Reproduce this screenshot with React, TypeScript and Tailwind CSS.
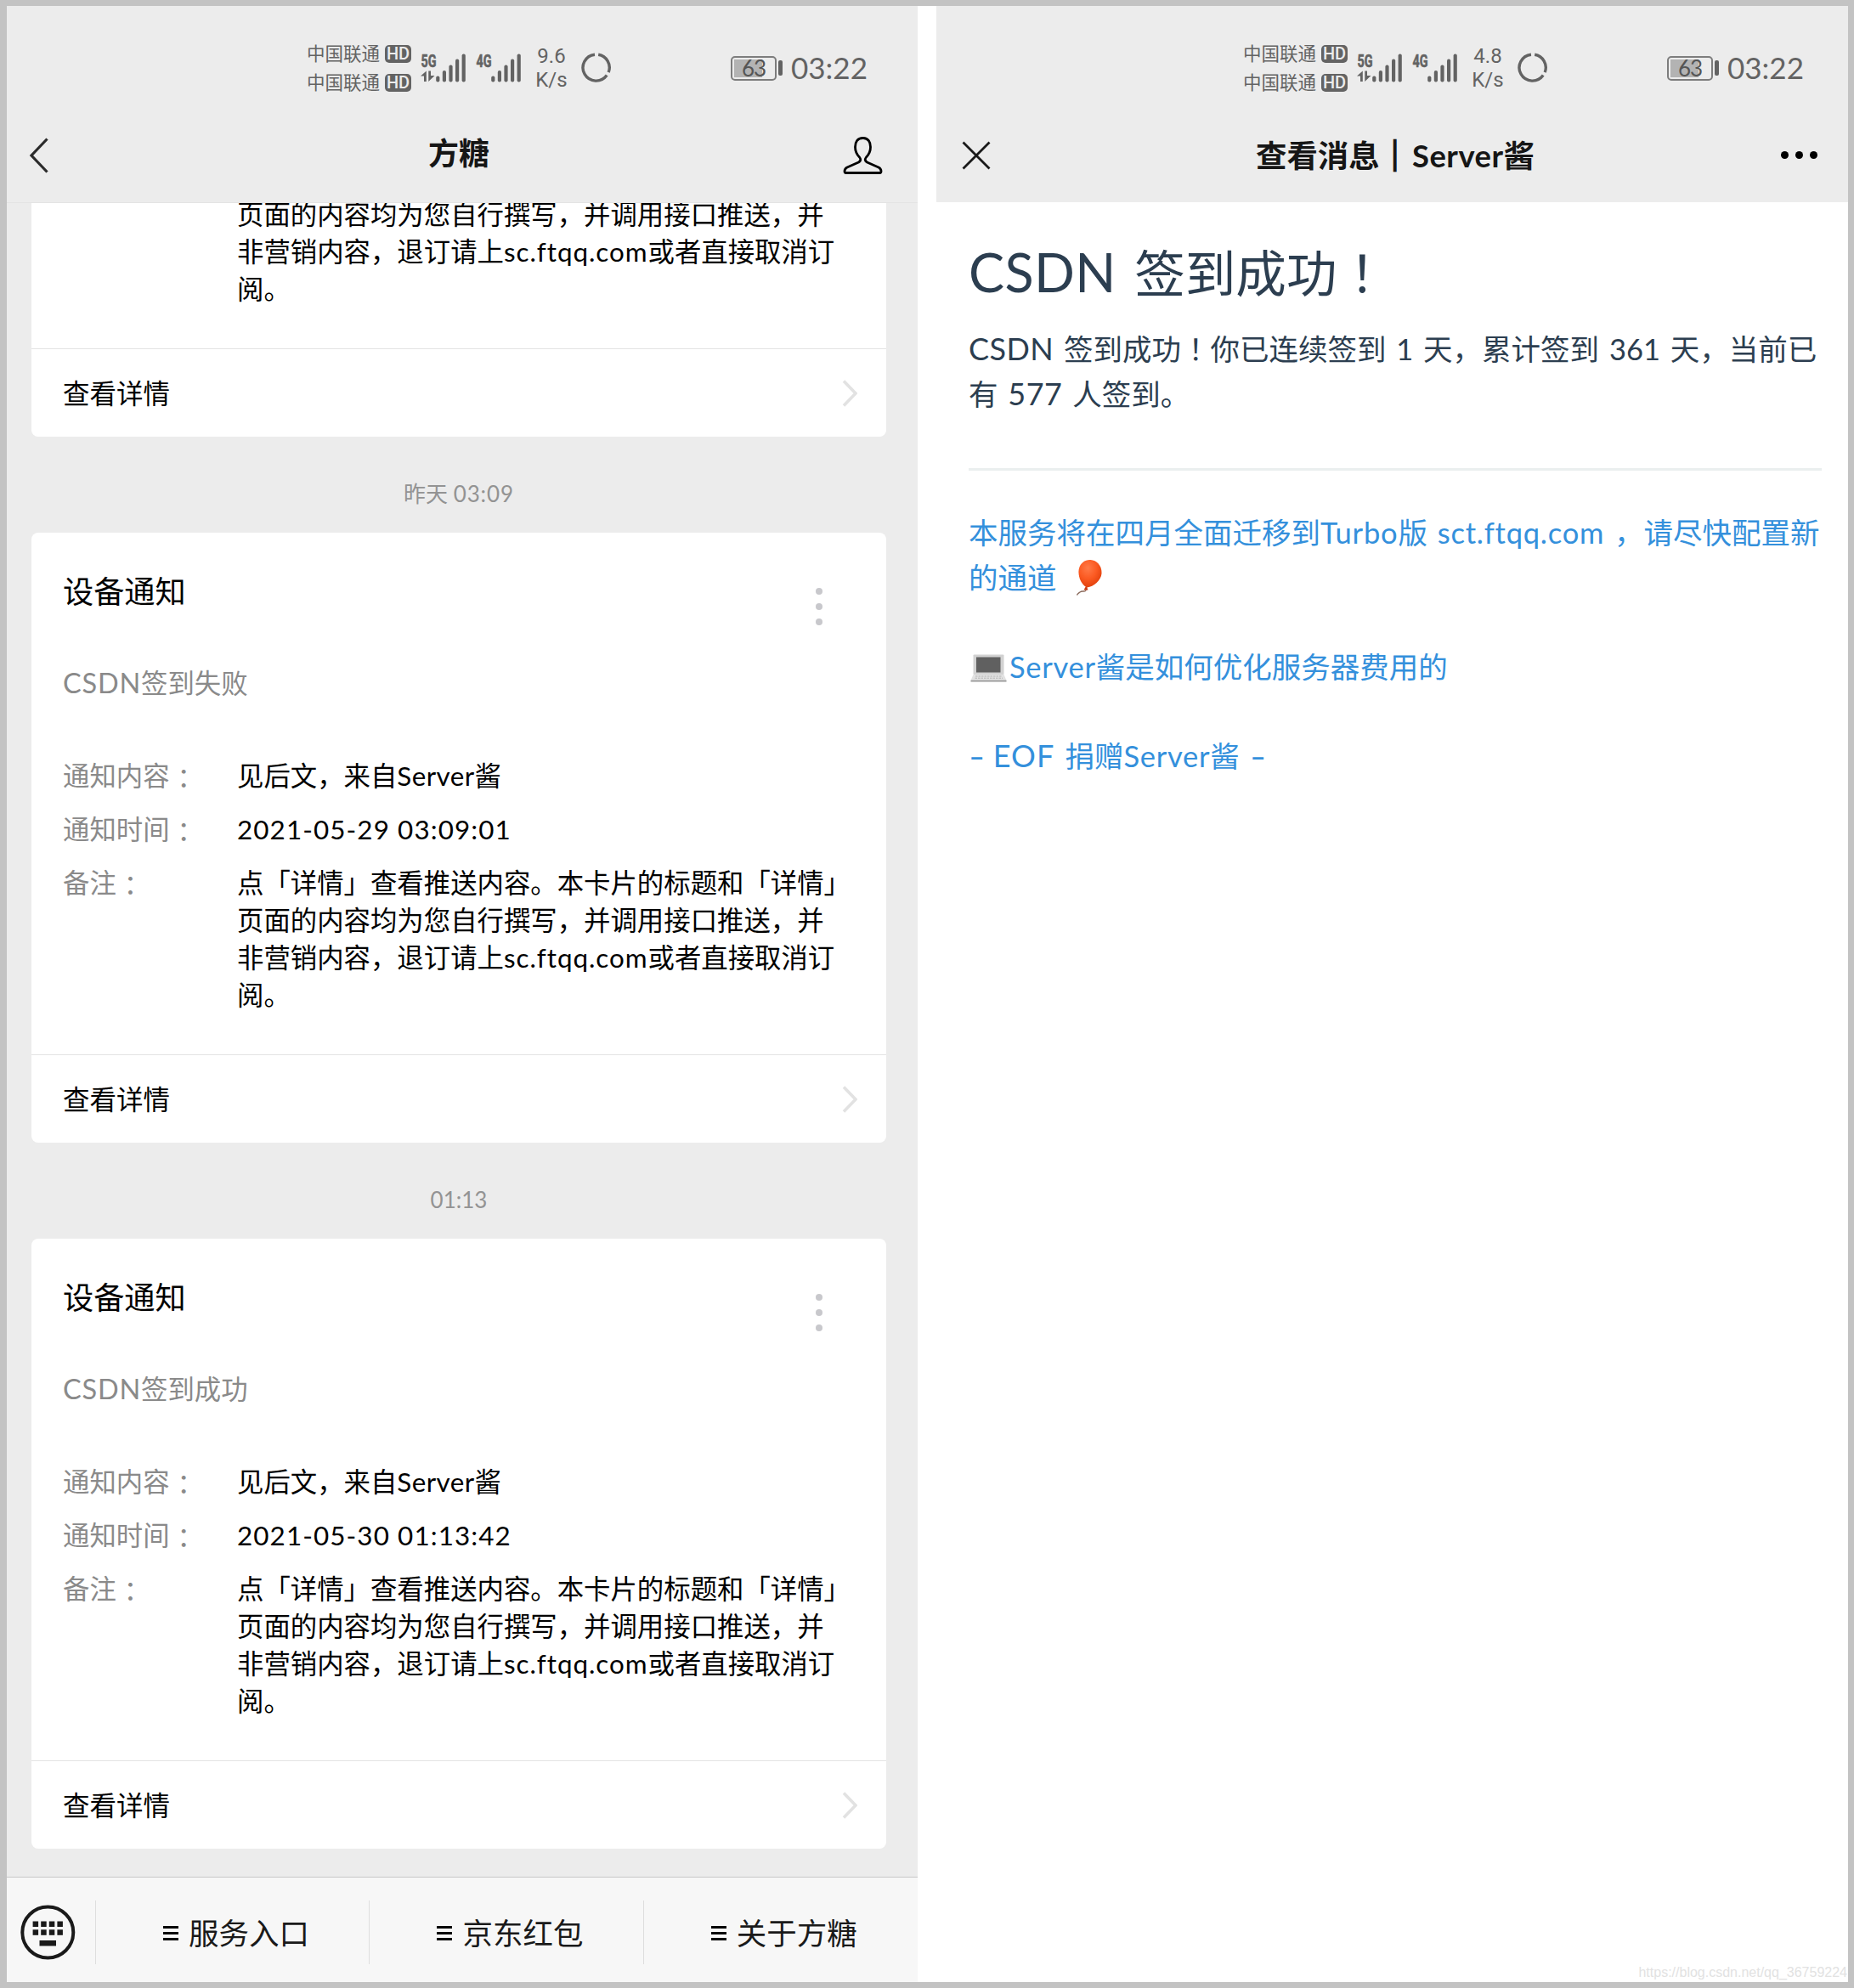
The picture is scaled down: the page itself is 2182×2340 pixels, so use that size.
import type { ReactNode } from "react";

type Notice = {
  id: number;
  time?: ReactNode;
  subject?: string;
  sentAt?: string;
};

// the oldest notice is scrolled up, only its tail is rendered
const notices: Notice[] = [
  { id: 1 },
  {
    id: 2,
    time: (
      <>
        昨天 <span className="tracking-[0.9px]">03:09</span>
      </>
    ),
    subject: "签到失败",
    sentAt: "2021-05-29 03:09:01",
  },
  { id: 3, time: "01:13", subject: "签到成功", sentAt: "2021-05-30 01:13:42" },
];

const tabs = ["服务入口", "京东红包", "关于方糖"];

// the TC face centres full-width punctuation in its cell
function Wide({ children }: { children: ReactNode }) {
  return <span className="font-['Noto_Sans_CJK_TC',sans-serif] leading-none">{children}</span>;
}

function Carrier() {
  return (
    <div className="flex h-[34px] items-center">
      <span className="w-[92px] text-[21.5px]">中国联通</span>
      <span className="flex h-[21px] w-[31px] items-center justify-center rounded-[5px] bg-[#636363] font-['Roboto'] text-[20px] leading-[21px] font-medium text-[#ececec]">
        HD
      </span>
    </div>
  );
}

function Signal({ label, arrows }: { label: string; arrows?: boolean }) {
  return (
    <svg width="54" height="48" viewBox="0 -6 54 48" fill="#636363">
      <text x="0.5" y="16.5" fontFamily="Roboto" fontWeight="700" fontSize="20" textLength="18" lengthAdjust="spacingAndGlyphs" stroke="#636363" strokeWidth="0.6">
        {label}
      </text>
      {arrows && <path d="M0 27.5 L6.8 21.5 V34 H4 V27.5 Z M9.3 21.5 H12 V27 H16.5 L9.3 34 Z" />}
      {[27.5, 21, 14.5, 7.5, 1.5].map((y, i) => (
        <rect key={y} x={18.2 + i * 7.6} y={y} width="4.2" height={34.5 - y} rx="2" />
      ))}
    </svg>
  );
}

function StatusBar({ speed }: { speed: string }) {
  return (
    <div className="flex h-[160px] items-center pl-[361px] text-[#636363]">
      <div className="w-[134px]">
        <Carrier />
        <Carrier />
      </div>
      <div className="flex w-[126px] gap-[11px]">
        <Signal label="5G" arrows />
        <Signal label="4G" />
      </div>
      <div className="w-[56px] text-center font-['Roboto'] text-[24px] leading-[28px]">
        <p>{speed}</p>
        <p>K/s</p>
      </div>
      <svg className="ml-[7px]" width="36" height="36" viewBox="0 0 36 36" fill="none" stroke="#636363" strokeWidth="3.4">
        <path d="M20.2 2.2 A15.5 15.5 0 0 1 32.2 23.1" />
        <path d="M30.2 26.6 A15.5 15.5 0 1 1 16 2.2" />
      </svg>
      <div className="ml-[140px] flex items-center">
        <div className="relative flex h-[29px] w-[54px] items-center justify-center rounded-[5px] border-2 border-[#7d7d7d] text-[26px] leading-[25px] text-[#555]">
          <div className="absolute top-[2px] left-[2px] h-[21px] w-[33px] bg-[#b3b3b3]" />
          <span className="relative tracking-[-1px]">63</span>
        </div>
        <div className="ml-[2px] h-[18px] w-[5px] rounded-[2px] bg-[#636363]" />
      </div>
      <span className="ml-[10px] pb-[2px] text-[35px] leading-[42px]">03:22</span>
    </div>
  );
}

function Row({ label, children }: { label: string; children: ReactNode }) {
  return (
    <div className="flex text-[31.4px] leading-[44px]">
      <span className="flex w-[205px] shrink-0 text-[#8a8a8a]">
        {label}
        <span className="-mb-[2px] pt-[2px] pl-px font-['Noto_Sans_CJK_TC',sans-serif]">：</span>
      </span>
      <div className="whitespace-nowrap text-black">{children}</div>
    </div>
  );
}

function NoteTail() {
  return (
    <>
      页面的内容均为您自行撰写，并调用接口推送，并
      <br />
      非营销内容，退订请上<span className="tracking-[0.95px]">sc.ftqq.com</span>或者直接取消订
      <br />
      阅。
    </>
  );
}

function NoticeCard({ notice }: { notice: Notice }) {
  return (
    <article className="mx-[37px] h-[718px] rounded-[8px] bg-white">
      <div className="relative flex h-[614px] flex-col justify-end px-[37px] pb-[48px]">
        {notice.subject && (
          <>
            <h3 className="text-[36.2px] leading-[44px] text-black">设备通知</h3>
            <p className="mt-16 mb-[65px] text-[31.4px] leading-[44px] text-[#8a8a8a]">
              <span className="text-[32.5px] leading-none tracking-[0.8px]">CSDN</span>
              {notice.subject}
            </p>
            <div className="absolute top-[65px] right-[75px] flex flex-col gap-[10px]">
              <i className="size-2 rounded-full bg-[#c8c8cc]" />
              <i className="size-2 rounded-full bg-[#c8c8cc]" />
              <i className="size-2 rounded-full bg-[#c8c8cc]" />
            </div>
          </>
        )}
        {notice.sentAt ? (
          <div className="flex flex-col gap-[19px]">
            <Row label="通知内容">
              见后文，来自<span className="tracking-[0.4px]">Server</span>酱
            </Row>
            <Row label="通知时间">
              <span className="tracking-[1.1px]">{notice.sentAt}</span>
            </Row>
            <Row label="备注">
              点「详情」查看推送内容。本卡片的标题和「详情」
              <br />
              <NoteTail />
            </Row>
          </div>
        ) : (
          <div className="pl-[205px] text-[31.4px] leading-[44px] whitespace-nowrap text-black">
            <NoteTail />
          </div>
        )}
      </div>
      <div className="flex h-[104px] items-center justify-between border-t border-[#e3e3e3] pr-[34px] pl-[37px] text-[31.5px] text-black">
        <span className="pt-[2px]">查看详情</span>
        <svg width="18" height="32" viewBox="0 0 18 32" fill="none" stroke="#e2e2e2" strokeWidth="3.6">
          <path d="M2 1.5 L16 16 L2 30.5" />
        </svg>
      </div>
    </article>
  );
}

function ChatScreen() {
  return (
    <section className="flex h-[2340px] w-[1080px] shrink-0 flex-col bg-[#ececec]">
      <header className="h-[239px] shrink-0 border-b border-[#e4e4e4]">
        <StatusBar speed="9.6" />
        <div className="grid h-11 grid-cols-[1fr_auto_1fr] items-center px-[34px]">
          <svg width="24" height="42" viewBox="0 0 24 42" fill="none" stroke="#2b2b2b" strokeWidth="3.2">
            <path d="M21.5 1.5 L3 21 L21.5 40.5" />
          </svg>
          <h1 className="pb-[6px] text-[36px] leading-[40px] font-bold text-[#161616]">方糖</h1>
          <svg className="mr-[7px] justify-self-end" width="47" height="46" viewBox="0 0 47 46" fill="none" stroke="#000" strokeWidth="2.8" strokeLinejoin="round">
            <path d="M23.5 2.5 C17 2.5 14.5 7.5 14.5 13 C14.5 18.5 16.5 22 19.5 25 C21.5 27.5 21 29.5 18.5 31 L5 37 C2.5 38.3 2 39.5 2 41.5 C2 43 2.3 43.5 3.5 43.5 H43.5 C44.7 43.5 45 43 45 41.5 C45 39.5 44.5 38.3 42 37 L28.5 31 C26 29.5 25.5 27.5 27.5 25 C30.5 22 32.5 18.5 32.5 13 C32.5 7.5 30 2.5 23.5 2.5 Z" />
          </svg>
        </div>
      </header>

      <main className="flex min-h-0 flex-1 flex-col justify-end overflow-hidden pb-[33px]">
        {notices.map((notice) => (
          <div key={notice.id} className="shrink-0">
            {notice.time && (
              <p className="h-[113px] pt-[51px] text-center text-[26px] leading-[32px] text-[#939393]">{notice.time}</p>
            )}
            <NoticeCard notice={notice} />
          </div>
        ))}
      </main>

      <footer className="flex h-[131px] shrink-0 border-t border-[#c8c8c8] bg-[#f7f7f7] pt-[27px]">
        <div className="flex h-[75px] w-[112px] items-center pl-[24px]">
          <svg width="65" height="65" viewBox="0 0 65 65" fill="#1a1a1a">
            <circle cx="32.3" cy="32.5" r="30" fill="none" stroke="#1a1a1a" strokeWidth="4" />
            {[14.6, 24.2, 33.8, 43.4].map((x) => (
              <g key={x}>
                <rect x={x} y="19.5" width="6.5" height="6.5" />
                <rect x={x} y="29.3" width="6.5" height="6.5" />
              </g>
            ))}
            <rect x="22.5" y="42" width="19.5" height="6.5" />
          </svg>
        </div>
        {tabs.map((tab) => (
          <div key={tab} className="flex h-[75px] w-[322.4px] items-center gap-[12px] border-l border-[#dedede] pt-[2px] pl-[79px]">
            <span className="flex w-[18px] flex-col gap-[4px]">
              <i className="h-[3px] bg-black" />
              <i className="h-[3px] bg-black" />
              <i className="h-[3px] bg-black" />
            </span>
            <span className="text-[35.5px] leading-[40px] text-[#1a1a1a]">{tab}</span>
          </div>
        ))}
      </footer>
    </section>
  );
}

function Balloon() {
  return (
    <svg className="ml-[11px] inline-block align-[-9px]" width="32" height="44" viewBox="0 0 32 44">
      <defs>
        <radialGradient id="balloon" cx="0.4" cy="0.3" r="0.7">
          <stop offset="0" stopColor="#ff7a48" />
          <stop offset="0.55" stopColor="#fb5a22" />
          <stop offset="1" stopColor="#e2400c" />
        </radialGradient>
      </defs>
      <path d="M12.5 35 C11.5 41 9 36 5 39 C3 40.5 2 41 1.5 42.5" fill="none" stroke="#8a6a5c" strokeWidth="1.4" />
      <path d="M12.5 31 L9.5 36.5 L14.5 36.5 Z" fill="#c93a12" />
      <path d="M17.5 1 C25 1.5 31 8 30.5 17 C30 25 21 32.5 13.5 33.5 C7 31 3 22 3.5 14 C4 6 10 0.5 17.5 1 Z" fill="url(#balloon)" />
    </svg>
  );
}

function Laptop() {
  return (
    <svg className="mr-[3px] ml-[2px] inline-block align-[-5px]" width="43" height="33" viewBox="0 0 43 33">
      <rect x="3.5" y="0.5" width="36" height="23.5" rx="1" fill="#d2d2d2" />
      <rect x="7" y="3.5" width="28.5" height="18" fill="#606060" />
      <path d="M3.5 24 H39.5 L42.5 31 H0.5 Z" fill="#e2e2e2" />
      <path d="M6 26 H37 M5.5 28.2 H38" stroke="#b4b4b4" strokeWidth="1" strokeDasharray="2.5 1" />
      <rect x="0.5" y="30.7" width="42" height="1.8" fill="#9a9a9a" />
    </svg>
  );
}

function MessageScreen() {
  return (
    <section className="h-[2340px] w-[1080px] shrink-0 bg-white">
      <header className="h-[238px] bg-[#ececec]">
        <StatusBar speed="4.8" />
        <div className="grid h-[46px] grid-cols-[1fr_auto_1fr] items-center px-[30px]">
          <svg width="34" height="34" viewBox="0 0 34 34" stroke="#1a1a1a" strokeWidth="2.8">
            <path d="M1.5 1.5 L32.5 32.5 M32.5 1.5 L1.5 32.5" />
          </svg>
          <h1 className="text-[36.4px] leading-[40px] font-bold text-[#161616]">
            查看消息<span className="mr-[2px] [-webkit-text-stroke:2.2px]">｜</span>
            <span className="tracking-[0.5px]">Server</span>酱
          </h1>
          <div className="mr-[13px] flex gap-[8px] justify-self-end pb-px">
            <i className="size-[9px] rounded-full bg-black" />
            <i className="size-[9px] rounded-full bg-black" />
            <i className="size-[9px] rounded-full bg-black" />
          </div>
        </div>
      </header>

      <main className="w-[1043px] pt-[43px] pl-[38px] text-[34.5px] leading-[53px] whitespace-nowrap text-[#2c3e50] [word-spacing:3px]">
        <h2 className="text-[59.6px] leading-[80px] [word-spacing:6px]">
          <span className="text-[63px] leading-none tracking-[0.4px]">CSDN</span> 签到成功<Wide>！</Wide>
        </h2>
        <p className="mt-[23px]">
          <span className="text-[36px] leading-none tracking-[0.4px]">CSDN</span> 签到成功<Wide>！</Wide>你已连续签到 1 天，累计签到 361 天，当前已
          <br />
          有 <span className="text-[36px] leading-none tracking-[0.5px]">577</span> 人签到。
        </p>
        <hr className="mt-[61px] w-[1004px] border-t-[3px] border-[#eaefef]" />
        <div className="mt-[46px] flex flex-col gap-[52px] text-[#3490dc]">
          <p className="h-[106px]">
            本服务将在四月全面迁移到<span className="tracking-[0.8px]">Turbo</span>版{" "}
            <span className="tracking-[0.75px]">sct.ftqq.com</span> ，请尽快配置新
            <br />
            的通道 <Balloon />
          </p>
          <p className="h-[53px]">
            <Laptop />
            <span className="tracking-[0.7px]">Server</span>酱是如何优化服务器费用的
          </p>
          <p className="h-[53px]">
            <span className="mr-[4px] inline-block origin-left scale-x-150">-</span>{" "}
            <span className="text-[36px] leading-none tracking-[1.2px]">EOF</span> 捐赠
            <span className="tracking-[0.7px]">Server</span>酱{" "}
            <span className="inline-block origin-left scale-x-150">-</span>
          </p>
        </div>
      </main>
    </section>
  );
}

export default function App() {
  return (
    <div className="relative flex h-[2340px] w-[2182px] gap-[22px] overflow-hidden bg-white font-['Lato','Noto_Sans_CJK_SC',sans-serif]">
      <ChatScreen />
      <MessageScreen />
      <div className="pointer-events-none absolute inset-0 border-[7px] border-l-[8px] border-[#c3c3c3]" />
      <span className="absolute right-[8px] bottom-[9px] font-['Liberation_Sans',sans-serif] text-[16px] leading-[18px] text-[#e2e2e2]">
        https://blog.csdn.net/qq_36759224
      </span>
    </div>
  );
}
